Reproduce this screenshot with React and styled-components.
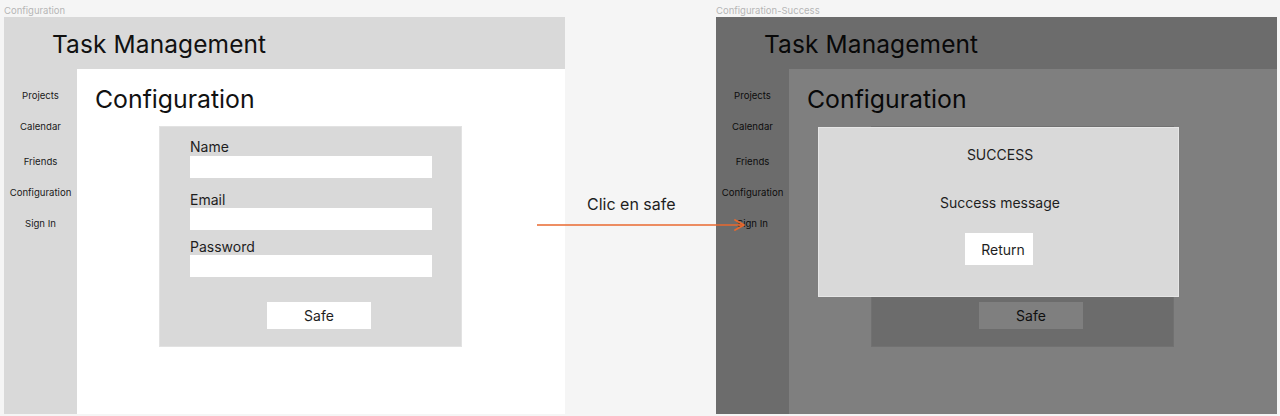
import React from "react";
import styled, { createGlobalStyle, css } from "styled-components";

const GlobalStyle = createGlobalStyle`
  html, body { margin: 0; padding: 0; }
  body {
    background: #f5f5f5;
    font-family: Inter, "Noto Sans", Arial, sans-serif;
    color: #1e1e1e;
    width: 1280px;
    height: 416px;
    overflow: hidden;
  }
  #root { height: 416px; }
`;

const Canvas = styled.div`
  position: relative;
  display: flex;
  gap: 151px;
  padding-left: 4px;
  height: 416px;
  box-sizing: border-box;
`;

const FrameColumn = styled.div`
  display: flex;
  flex-direction: column;
  width: 561px;
`;

const FrameLabel = styled.div`
  height: 17px;
  font-size: 9.5px;
  line-height: 21px;
  color: #b5b5b5;
  white-space: nowrap;
`;

const Frame = styled.div`
  position: relative;
  height: 397px;
  display: grid;
  grid-template-columns: 73px 1fr;
  grid-template-rows: 52px 1fr;
  overflow: hidden;
  ${(p) =>
    p.$dimmed &&
    css`
      &::after {
        content: "";
        position: absolute;
        inset: 0;
        background: rgba(0, 0, 0, 0.5);
      }
    `}
`;

const Header = styled.header`
  grid-column: 1 / 3;
  background: #d9d9d9;
  display: flex;
  align-items: center;
  padding-left: 48px;
  padding-top: 1px;
  font-size: 24.5px;
  color: #111;
  letter-spacing: 0.1px;
`;

const Sidebar = styled.nav`
  background: #d9d9d9;
  display: flex;
  flex-direction: column;
  align-items: center;
`;

const NavItem = styled.div`
  height: 12px;
  line-height: 12px;
  font-size: 9.6px;
  color: #1a1a1a;
  margin-top: ${(p) => p.$top}px;
  white-space: nowrap;
`;

const Main = styled.main`
  background: #fff;
  padding-left: 18px;
  display: flex;
  flex-direction: column;
  align-items: flex-start;
`;

const PageTitle = styled.h1`
  margin: 15px 0 0;
  font-size: 24.8px;
  line-height: 30px;
  font-weight: 400;
  color: #111;
`;

const FormPanel = styled.div`
  margin: 12px 0 0 64px;
  width: 303px;
  height: 221px;
  box-sizing: border-box;
  background: #d9d9d9;
  border: 1px solid #e2e2e2;
  padding: 11px 0 0 30px;
  display: flex;
  flex-direction: column;
`;

const Field = styled.div`
  display: flex;
  flex-direction: column;
  margin-top: ${(p) => p.$top}px;
`;

const Label = styled.label`
  font-size: 14px;
  line-height: 17px;
  height: 17px;
  color: #1e1e1e;
`;

const Input = styled.div`
  width: 242px;
  height: 22px;
  margin-top: ${(p) => p.$top || 0}px;
  background: #fff;
`;

const SaveButton = styled.div`
  margin: 25px 0 0 77px;
  width: 104px;
  height: 27px;
  background: #fff;
  display: flex;
  align-items: center;
  justify-content: center;
  font-size: 14px;
  color: #1e1e1e;
`;

const Modal = styled.div`
  position: absolute;
  left: 102px;
  top: 110px;
  width: 361px;
  height: 170px;
  box-sizing: border-box;
  background: #d9d9d9;
  border: 1px solid #e6e6e6;
  z-index: 2;
  display: flex;
  flex-direction: column;
  align-items: center;
`;

const ModalTitle = styled.div`
  margin-top: 18px;
  padding-left: 3px;
  font-size: 14px;
  line-height: 17px;
  color: #1e1e1e;
`;

const ModalMessage = styled.div`
  margin-top: 31px;
  padding-left: 3px;
  font-size: 14px;
  line-height: 17px;
  color: #1e1e1e;
`;

const ReturnButton = styled.div`
  margin-top: 22px;
  width: 68px;
  height: 32px;
  box-sizing: border-box;
  padding-left: 9px;
  background: #fff;
  display: flex;
  align-items: center;
  justify-content: center;
  font-size: 14px;
  color: #1e1e1e;
`;

const Connector = styled.div`
  position: absolute;
  left: 536px;
  top: 190px;
  width: 212px;
  height: 48px;
  z-index: 3;
  pointer-events: none;
`;

const ConnectorLabel = styled.div`
  position: absolute;
  left: 51px;
  top: 4px;
  font-size: 16px;
  line-height: 20px;
  color: #1e1e1e;
  white-space: nowrap;
`;

const ArrowSvg = styled.svg`
  position: absolute;
  left: 0;
  top: 28px;
`;

const navItems = [
  ["Projects", 21],
  ["Calendar", 19],
  ["Friends", 23],
  ["Configuration", 19],
  ["Sign In", 19],
];

function Screen({ dimmed, children }) {
  return (
    <Frame $dimmed={dimmed}>
      <Header>Task Management</Header>
      <Sidebar>
        {navItems.map(([label, top]) => (
          <NavItem key={label} $top={top}>
            {label}
          </NavItem>
        ))}
      </Sidebar>
      <Main>
        <PageTitle>Configuration</PageTitle>
        <FormPanel>
          <Field $top={0}>
            <Label>Name</Label>
            <Input $top={1} />
          </Field>
          <Field $top={13}>
            <Label>Email</Label>
            <Input />
          </Field>
          <Field $top={8}>
            <Label>Password</Label>
            <Input />
          </Field>
          <SaveButton>Safe</SaveButton>
        </FormPanel>
      </Main>
      {children}
    </Frame>
  );
}

export default function App() {
  return (
    <>
      <GlobalStyle />
      <Canvas>
        <FrameColumn>
          <FrameLabel>Configuration</FrameLabel>
          <Screen />
        </FrameColumn>
        <FrameColumn>
          <FrameLabel>Configuration-Success</FrameLabel>
          <Screen dimmed>
            <Modal>
              <ModalTitle>SUCCESS</ModalTitle>
              <ModalMessage>Success message</ModalMessage>
              <ReturnButton>Return</ReturnButton>
            </Modal>
          </Screen>
        </FrameColumn>
        <Connector>
          <ConnectorLabel>Clic en safe</ConnectorLabel>
          <ArrowSvg width="212" height="14" viewBox="0 0 212 14">
            <path d="M1 7 H207" stroke="#e8692f" strokeWidth="1.6" fill="none" />
            <path
              d="M199 2 L208 7 L199 12"
              stroke="#e8692f"
              strokeWidth="1.8"
              fill="none"
              strokeLinecap="round"
              strokeLinejoin="round"
            />
          </ArrowSvg>
        </Connector>
      </Canvas>
    </>
  );
}
